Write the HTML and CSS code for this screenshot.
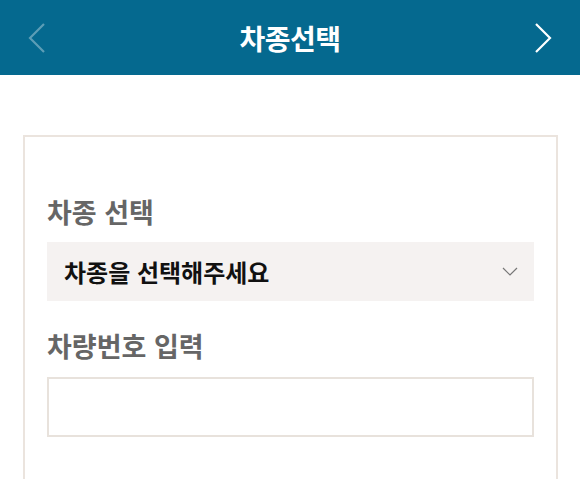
FILE: index.html
```html
<!DOCTYPE html>
<html lang="ko">
<head>
<meta charset="utf-8">
<title>차종선택</title>
<link rel="stylesheet" href="styles.css">
</head>
<body>
<header class="topbar">
  <button class="nav-btn nav-prev" aria-label="이전">
    <svg width="20" height="32" viewBox="0 0 20 32"><polyline points="17,2 3,16 17,30" fill="none" stroke="currentColor" stroke-width="2.2"/></svg>
  </button>
  <h1 class="title">차종선택</h1>
  <button class="nav-btn nav-next" aria-label="다음">
    <svg width="20" height="32" viewBox="0 0 20 32"><polyline points="3,2 17,16 3,30" fill="none" stroke="currentColor" stroke-width="2.2"/></svg>
  </button>
</header>
<main class="content">
  <section class="card">
    <div class="field">
      <label class="field-label">차종 선택</label>
      <div class="select">
        <span class="select-text">차종을 선택해주세요</span>
        <svg class="select-arrow" width="16" height="10" viewBox="0 0 16 10"><polyline points="1,1 8,8 15,1" fill="none" stroke="#777" stroke-width="1.2"/></svg>
      </div>
    </div>
    <div class="field field-second">
      <label class="field-label">차량번호 입력</label>
      <div class="input"></div>
    </div>
  </section>
</main>
</body>
</html>
```
FILE: styles.css
```css
* { box-sizing: border-box; }
html, body { margin: 0; padding: 0; background: #fff; }
body {
  font-family: "Noto Sans CJK KR", "Noto Sans", sans-serif;
  overflow: hidden;
}
.topbar {
  height: 75px;
  background: #05698f;
  display: flex;
  align-items: center;
  justify-content: space-between;
  padding: 0 27px 0 27px;
}
.nav-btn {
  background: none;
  border: 0;
  padding: 0;
  width: 20px;
  height: 32px;
  display: flex;
  align-items: center;
  justify-content: center;
  color: #fff;
}
.nav-prev { color: rgba(255,255,255,0.35); }
.title {
  margin: 0;
  color: #fff;
  font-size: 28px;
  font-weight: 700;
  letter-spacing: -0.5px;
  line-height: 34px;
}
.content {
  padding: 60px 22px 0 23px;
}
.card {
  border: 2px solid #ebe4de;
  border-bottom: 0;
  min-height: 400px;
  padding: 58px 22px 0 22px;
}
.field { display: flex; flex-direction: column; }
.field-second { margin-top: 28px; }
.field-label {
  font-size: 27px;
  font-weight: 700;
  color: #666;
  line-height: 34px;
  margin-bottom: 13px;
}
.field-second .field-label { margin-bottom: 14px; }
.select {
  height: 59px;
  background: #f5f2f1;
  display: flex;
  align-items: center;
  justify-content: space-between;
  padding: 0 16px 0 17px;
}
.select-text {
  font-size: 24px;
  font-weight: 700;
  color: #111;
}
.select-arrow { display: block; margin-top: 1px; }
.input {
  height: 60px;
  border: 2px solid #e8e2dc;
  background: #fff;
}
```
